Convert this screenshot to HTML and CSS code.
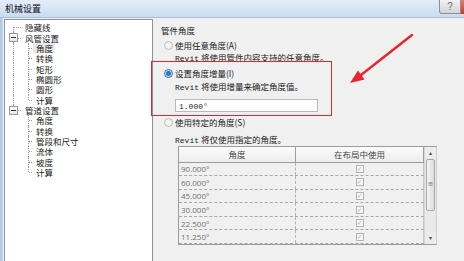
FILE: index.html
```html
<!DOCTYPE html>
<html>
<head>
<meta charset="utf-8">
<link rel="stylesheet" href="styles.css">
</head>
<body>
<div class="win">
  <div class="titlebar">
    <span class="title">机械设置</span>
    <div class="tbtns"><span class="help">?</span><span class="close"></span></div>
  </div>
  <div class="main">
    <div class="frame-left"></div>
    <div class="tree">
      <div class="row"><span class="c first"></span><span class="t">隐藏线</span></div>
      <div class="row"><span class="c tee"><span class="exp"></span></span><span class="t">风管设置</span></div>
      <div class="row"><span class="c line"></span><span class="c2 tee"></span><span class="t sel">角度</span></div>
      <div class="row"><span class="c line"></span><span class="c2 tee"></span><span class="t">转换</span></div>
      <div class="row"><span class="c line"></span><span class="c2 tee"></span><span class="t">矩形</span></div>
      <div class="row"><span class="c line"></span><span class="c2 tee"></span><span class="t">椭圆形</span></div>
      <div class="row"><span class="c line"></span><span class="c2 tee"></span><span class="t">圆形</span></div>
      <div class="row"><span class="c line"></span><span class="c2 ell"></span><span class="t">计算</span></div>
      <div class="row"><span class="c ell"><span class="exp"></span></span><span class="t">管道设置</span></div>
      <div class="row"><span class="c"></span><span class="c2 tee"></span><span class="t">角度</span></div>
      <div class="row"><span class="c"></span><span class="c2 tee"></span><span class="t">转换</span></div>
      <div class="row"><span class="c"></span><span class="c2 tee"></span><span class="t">管段和尺寸</span></div>
      <div class="row"><span class="c"></span><span class="c2 tee"></span><span class="t">流体</span></div>
      <div class="row"><span class="c"></span><span class="c2 tee"></span><span class="t">坡度</span></div>
      <div class="row"><span class="c"></span><span class="c2 ell"></span><span class="t">计算</span></div>
    </div>
    <div class="content">
      <div class="heading">管件角度</div>
      <div class="opt opt1"><span class="radio dim"></span><span>使用任意角度(A)</span></div>
      <div class="desc d1"><span class="mono">Revit</span> 将使用管件内容支持的任意角度。</div>
      <div class="opt opt2"><span class="radio on"></span><span>设置角度增量(I)</span></div>
      <div class="desc d2"><span class="mono">Revit</span> 将使用增量来确定角度值。</div>
      <div class="input"><span class="mono">1.000°</span></div>
      <div class="opt opt3"><span class="radio dim"></span><span>使用特定的角度(S)</span></div>
      <div class="desc d3"><span class="mono">Revit</span> 将仅使用指定的角度。</div>
      <div class="grid">
        <div class="gtable">
          <div class="ghead"><div class="h1">角度</div><div class="h2">在布局中使用</div></div>
          <div class="grow"><div class="g1">90.000°</div><div class="g2"><span class="cb">✓</span></div></div>
          <div class="grow"><div class="g1">60.000°</div><div class="g2"><span class="cb">✓</span></div></div>
          <div class="grow"><div class="g1">45.000°</div><div class="g2"><span class="cb">✓</span></div></div>
          <div class="grow"><div class="g1">30.000°</div><div class="g2"><span class="cb">✓</span></div></div>
          <div class="grow"><div class="g1">22.500°</div><div class="g2"><span class="cb">✓</span></div></div>
          <div class="grow"><div class="g1">11.250°</div><div class="g2"><span class="cb">✓</span></div></div>
        </div>
        <div class="sbar">
          <div class="sarrow">▴</div>
          <div class="thumb"><span class="grip">≡</span></div>
          <div class="track"></div>
          <div class="sarrow">▾</div>
        </div>
      </div>
    </div>
  </div>
  <div class="redbox"></div>
  <svg class="arrow" width="464" height="261" viewBox="0 0 464 261">
    <line x1="412" y1="35" x2="361" y2="75" stroke="#e8262b" stroke-width="2.4" stroke-linecap="round"/>
    <polygon points="350,83 364.5,79.5 358,70.5" fill="#e8262b"/>
  </svg>
</div>
</body>
</html>
```

FILE: styles.css
```css
* { box-sizing: border-box; }
html, body { margin: 0; padding: 0; }
body {
  width: 464px; height: 261px; overflow: hidden;
  font-family: "Noto Sans CJK SC", "Noto Sans", sans-serif;
  font-size: 8.5px; color: #1a1a1a;
}
.win { position: relative; width: 464px; height: 261px; background: #f0f0f0; overflow: hidden; }

.titlebar {
  height: 18px; display: flex; align-items: center; justify-content: space-between;
  background: linear-gradient(to bottom, #e4eefa 0%, #d3e3f5 60%, #c9dcf1 100%);
  border-bottom: 1px solid #a9bfd6;
}
.title { margin-left: 5px; font-size: 9px; color: #111; margin-top: -1px; }
.tbtns { display: flex; align-self: flex-start; height: 14px; }
.help {
  width: 22px; height: 14px; border: 1px solid #8a8f96; border-top: none;
  border-radius: 0 0 0 3px;
  background: linear-gradient(to bottom, #f2f2f2, #d2d4d8);
  color: #6a6a6a; font-family: "Liberation Sans", sans-serif; font-size: 10px;
  display: flex; align-items: center; justify-content: center; line-height: 1;
}
.close { width: 3px; height: 14px; background: linear-gradient(to bottom, #e08070, #c4382c); }

.main { display: flex; height: 243px; }
.frame-left { width: 3px; background: linear-gradient(to right, #a9c4e2, #c5d8ee); flex: none; }
.tree {
  width: 149px; flex: none; margin-left: 1px; margin-top: 1px;
  background: #fff; border: 1px solid #8e9299; border-bottom: none;
  padding: 2px 0 0 1px;
}
.row { display: flex; height: 10.36px; align-items: center; }
.c, .c2 { position: relative; height: 100%; flex: none; }
.c { width: 16px; }
.c2 { width: 11px; }
.c.line::before, .c.tee::before, .c.ell::before, .c.first::before,
.c2.tee::before, .c2.ell::before {
  content: ""; position: absolute; left: 7px; top: 0; bottom: 0;
  border-left: 1px dotted #9a9a9a;
}
.c2.tee::before, .c2.ell::before { left: 6px; }
.c.ell::before, .c2.ell::before { bottom: 50%; }
.c.first::before { top: 50%; }
.c.tee::after, .c.ell::after, .c.first::after, .c2.tee::after, .c2.ell::after {
  content: ""; position: absolute; left: 8px; right: 1px; top: 50%;
  border-top: 1px dotted #9a9a9a;
}
.c2.tee::after, .c2.ell::after { left: 7px; right: 1px; }
.exp {
  position: absolute; left: 3px; top: 1px; width: 9px; height: 9px; z-index: 1;
  border: 1px solid #9c9c9c; background: linear-gradient(#ffffff, #e6e6e6);
}
.exp::after { content: ""; position: absolute; left: 1px; right: 1px; top: 3px; border-top: 1px solid #333; }
.t { padding-left: 3px; line-height: 10px; white-space: nowrap; }
.t.sel { background: #e9e9e9; padding-right: 2px; margin-left: 0; }

.content { flex: 1; padding-left: 8px; padding-top: 6.5px; position: relative; }
.heading { height: 11px; line-height: 11px; }
.opt { display: flex; align-items: center; height: 11px; line-height: 11px; padding-left: 3px; gap: 2px; }
.opt1 { margin-top: 4px; }
.opt2 { margin-top: 4.5px; }
.opt3 { margin-top: 5.5px; }
.radio {
  width: 9px; height: 9px; border-radius: 50%; flex: none;
  border: 1px solid #8e8f8f;
  background: radial-gradient(circle at 50% 40%, #ffffff 0%, #e2e2e2 100%);
}
.radio.dim { border-color: #c2c2c2; background: radial-gradient(circle, #fafafa, #e6e6e6); }
.radio.on {
  border-color: #4c6d9c;
  background: radial-gradient(circle, #1f7fd8 0 2.2px, #a7cdee 2.4px 3px, #e8eef5 3.3px);
}
.desc { padding-left: 14px; height: 11px; line-height: 11px; white-space: nowrap; }
.d1 { margin-top: 1.5px; }
.d2 { margin-top: 2.5px; }
.d3 { margin-top: 6px; }
.mono { font-family: "Liberation Mono", "Noto Sans CJK SC", monospace; font-size: 8px; }
.input {
  margin-top: 6.5px; margin-left: 14px; width: 143px; height: 13px;
  background: #fff; border: 1px solid #b5b9c0; padding-left: 3px;
  line-height: 11px;
}

.grid {
  margin-top: 0.5px; margin-left: 17px; width: 259px; height: 99px;
  display: flex; border: 1px solid #9c9c9c; border-right: none; background: #f0f0f0;
}
.gtable { width: 245px; flex: none; }
.ghead {
  display: flex; height: 16px; border-bottom: 1px solid #9c9c9c;
  background: linear-gradient(#fbfbfb, #ededed);
}
.h1, .h2 { display: flex; align-items: center; justify-content: center; color: #444; }
.h1 { width: 117px; border-right: 1px solid #9c9c9c; }
.h2 { flex: 1; border-right: 1px solid #9c9c9c; }
.grow { display: flex; height: 13.6px; border-bottom: 1px dashed #a8a8a8; }
.grow:last-child { border-bottom-style: dashed; }
.g1 {
  width: 117px; border-right: 1px dashed #b4b4b4; padding-left: 2px;
  font-family: "Open Sans", "Noto Sans", sans-serif; font-size: 8px; color: #707070;
  display: flex; align-items: center;
}
.g2 { flex: 1; display: flex; align-items: center; justify-content: center; border-right: 1px solid #c8c8c8; }
.cb {
  width: 8px; height: 8px; border: 1px solid #b3b3b3; background: #f6f6f6;
  font-family: "DejaVu Sans", sans-serif; font-size: 6px; line-height: 6px; color: #a8a8a8;
  display: flex; align-items: center; justify-content: center;
}
.sbar {
  width: 13px; flex: none; display: flex; flex-direction: column;
  background: #e9e9e9; border-left: 1px solid #d6d6d6; border-right: 1px solid #cfcfcf;
}
.sarrow {
  height: 12px; display: flex; align-items: center; justify-content: center;
  font-family: "DejaVu Sans", sans-serif; font-size: 6px; color: #4a4a4a; background: #ececec;
}
.thumb {
  height: 52px; margin: 0 1px; border: 1px solid #a7a7a7; border-radius: 2px;
  background: linear-gradient(to right, #f4f4f4, #dcdcdc);
  display: flex; align-items: center; justify-content: center;
}
.grip { font-family: "DejaVu Sans", sans-serif; font-size: 7px; color: #7a7a7a; line-height: 1; }
.track { flex: 1; }

.redbox {
  position: absolute; left: 151px; top: 61px; width: 181px; height: 55px;
  border: 1.5px solid #d92b35;
}
.arrow { position: absolute; left: 0; top: 0; pointer-events: none; }
```
